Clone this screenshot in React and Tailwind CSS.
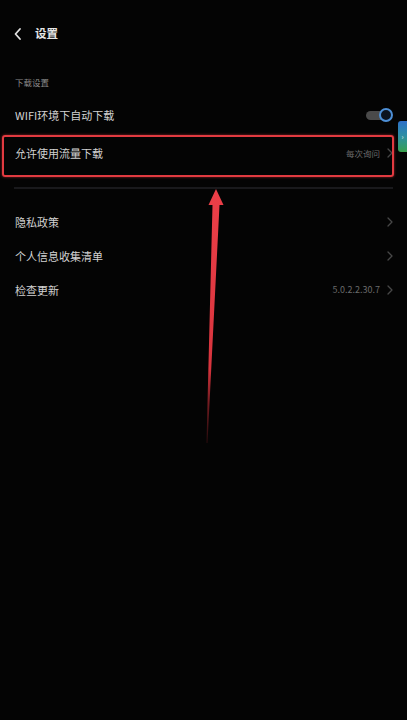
// App.jsx
const font = { fontFamily: '"Noto Sans CJK SC", "Noto Sans", sans-serif' };

function Chevron() {
  return (
    <svg width="6" height="10" viewBox="0 0 6 10" className="shrink-0">
      <path d="M1 1 L5 5 L1 9" fill="none" stroke="#474747" strokeWidth="1.3" strokeLinecap="round" strokeLinejoin="round" />
    </svg>
  );
}

function Row({ label, value }) {
  return (
    <div className="h-[34px] flex items-center justify-between pl-[15px] pr-[14px]">
      <span className="text-[11px] text-[#d2d2d2]">{label}</span>
      <div className="flex items-center gap-[7px]">
        {value && <span className="text-[9px] text-[#6a6a6a]">{value}</span>}
        <Chevron />
      </div>
    </div>
  );
}

export default function App() {
  return (
    <div className="relative w-[407px] h-[720px] bg-[#040404] overflow-hidden" style={font}>
      {/* HEADER */}
      <div className="h-[68px] flex items-center pl-[13px] gap-[12px]">
        <svg width="10" height="14" viewBox="0 0 10 14">
          <path d="M7 2 L2.5 7 L7 12" fill="none" stroke="#e0e0e0" strokeWidth="1.8" strokeLinecap="round" strokeLinejoin="round" />
        </svg>
        <span className="text-[11.5px] font-bold text-[#e6e6e6]">设置</span>
      </div>

      {/* DOWNLOAD SETTINGS */}
      <div className="h-[28px] flex items-center pl-[15px]">
        <span className="text-[8.5px] text-[#8c8c8c]">下载设置</span>
      </div>

      <div className="h-[38px] flex items-center justify-between pl-[15px] pr-[14px]">
        <span className="text-[11px] text-[#d2d2d2]">WIFI环境下自动下载</span>
        <div className="relative w-[27px] h-[14px] flex items-center">
          <div className="w-[22px] h-[9px] rounded-full bg-[#4a4a4a]" />
          <div className="absolute right-0 top-0 w-[14px] h-[14px] rounded-full border-2 border-[#4d8fd6] bg-[#0c1420]" />
        </div>
      </div>

      <div className="h-[44px] flex items-center justify-between pl-[15px] pr-[14px] pb-[6px]">
        <span className="text-[11px] text-[#d2d2d2]">允许使用流量下载</span>
        <div className="flex items-center gap-[7px]">
          <span className="text-[8.5px] text-[#6a6a6a]">每次询问</span>
          <Chevron />
        </div>
      </div>

      <div className="mt-[9px] mx-[14px] h-[2px] bg-[#19191c]" />

      <div className="pt-[16px]">
        <Row label="隐私政策" />
        <Row label="个人信息收集清单" />
        <Row label="检查更新" value="5.0.2.2.30.7" />
      </div>

      {/* side floating tab */}
      <div className="absolute right-0 top-[121px] w-[9px] h-[31px] rounded-l-[3px] bg-gradient-to-b from-[#2f6fc8] via-[#2f8fa0] to-[#3aa04a] flex items-center justify-center">
        <span className="text-[7px] leading-none text-white/80">›</span>
      </div>

      {/* annotation: red box */}
      <div className="absolute left-[2px] top-[135px] w-[392px] h-[42px] border-2 border-[#e23a40] rounded-[3px] shadow-[0_0_3px_rgba(226,58,64,0.6)]" />

      {/* annotation: arrow */}
      <svg className="absolute left-0 top-0" width="407" height="720" viewBox="0 0 407 720">
        <defs>
          <linearGradient id="arrowFade" x1="0" y1="190" x2="0" y2="445" gradientUnits="userSpaceOnUse">
            <stop offset="0" stopColor="#ec3f48" />
            <stop offset="0.7" stopColor="#d8343d" />
            <stop offset="1" stopColor="#5a1418" stopOpacity="0.4" />
          </linearGradient>
        </defs>
        <polygon
          points="216,189 223.5,205 219.5,205 207.5,443 206.5,443 212.5,205 208.5,205"
          fill="url(#arrowFade)"
        />
      </svg>
    </div>
  );
}
